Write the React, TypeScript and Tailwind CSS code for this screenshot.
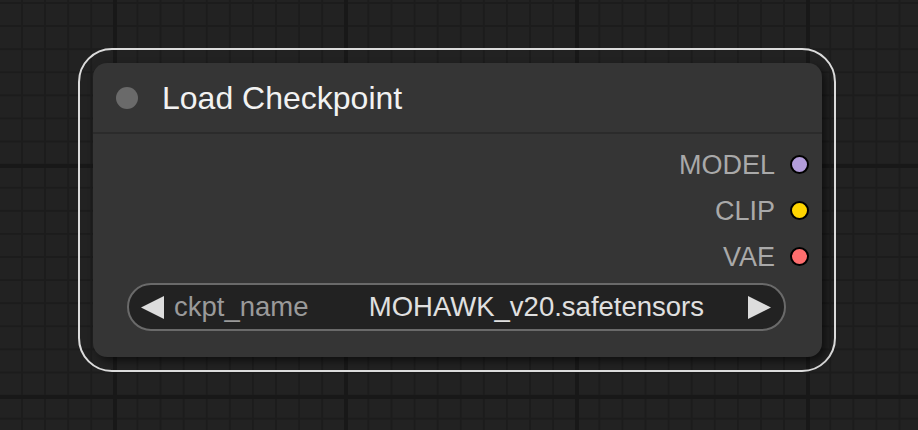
import React from "react";

const slots = [
  { name: "MODEL", color: "bg-[#b39ddb]" },
  { name: "CLIP", color: "bg-[#ffd500]" },
  { name: "VAE", color: "bg-[#ff6e6e]" },
];

export default function App() {
  return (
    <div
      className="w-[918px] h-[430px] overflow-hidden bg-[#222222] bg-[image:linear-gradient(to_right,#181818_4px,transparent_4px),linear-gradient(to_bottom,#181818_4px,transparent_4px),linear-gradient(to_right,#1c1c1c_2px,transparent_2px),linear-gradient(to_bottom,#1c1c1c_2px,transparent_2px)] bg-[size:231px_231px,231px_231px,23.1px_23.1px,23.1px_23.1px] bg-[position:113px_0px,0px_164px,21px_0px,0px_2px] pl-[78px] pt-[48px]"
      style={{ fontFamily: '"Liberation Sans", Arial, sans-serif' }}
    >
      <div className="w-[758px] h-[324px] rounded-[34px] border-2 border-[#dcdcdc] p-[13px]">
        <div className="w-[729px] h-[294px] rounded-[14px] bg-[#353535] shadow-[4px_4px_8px_rgba(0,0,0,0.55)] flex flex-col">
          <div className="h-[69px] flex items-center">
            <div className="ml-[23px] w-[22px] h-[22px] rounded-full bg-[#6a6a6a]" />
            <div className="ml-[24px] text-[32px] leading-none text-[#f2f2f2]">
              Load Checkpoint
            </div>
          </div>
          <div className="h-[2px] bg-[#2b2b2b]" />
          <div className="pt-[7px] flex flex-col">
            {slots.map((s) => (
              <div key={s.name} className="h-[46px] flex items-center justify-end pr-[13px]">
                <span className="text-[27px] leading-none text-[#a9a9a9] mt-[3px]">{s.name}</span>
                <span
                  className={`ml-[15px] w-[19px] h-[19px] rounded-full border-2 border-black ${s.color}`}
                />
              </div>
            ))}
          </div>
          <div className="mt-[4px] ml-[34px] w-[659px] h-[48px] rounded-full border-2 border-[#6a6a6a] bg-[#222222] flex items-center text-[27.5px] leading-none">
            <svg width="23" height="23" viewBox="0 0 23 23" className="ml-[12px] shrink-0">
              <polygon points="23,0 23,23 0,11.5" fill="#dddddd" />
            </svg>
            <span className="ml-[10px] text-[#9a9a9a]">ckpt_name</span>
            <span className="flex-1 text-right text-[#e0e0e0] mr-[44px]">MOHAWK_v20.safetensors</span>
            <svg width="23" height="23" viewBox="0 0 23 23" className="mr-[13px] shrink-0">
              <polygon points="0,0 0,23 23,11.5" fill="#dddddd" />
            </svg>
          </div>
        </div>
      </div>
    </div>
  );
}
